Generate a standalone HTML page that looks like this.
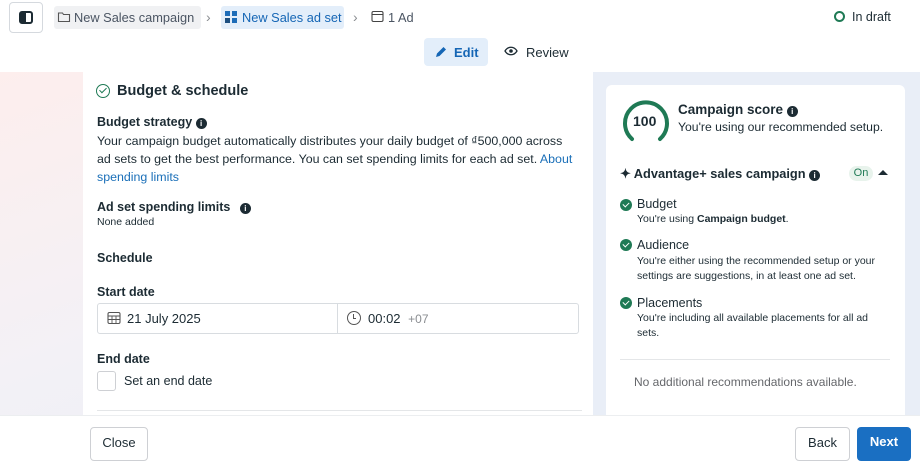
<!DOCTYPE html>
<html><head><style>
*{box-sizing:border-box;margin:0;padding:0}
body{width:920px;height:456px;overflow:hidden;font-family:"Liberation Sans",sans-serif;color:#1c2b33;background:#fff;position:relative;font-size:13px}
.abs{position:absolute}
.bg{left:0;top:72px;width:920px;height:344px;background:linear-gradient(160deg,#fdeeed 0%,#f3f1f6 45%,#e6eef8 100%)}
.rp{left:593px;top:72px;width:327px;height:344px;background:#e9eef7}
.card{left:83px;top:72px;width:510px;height:344px;background:#fff}
.rcard{left:606px;top:85px;width:299px;height:340px;background:#fff;border-radius:6px}
.b{font-weight:bold}
.small{font-size:10.5px}
.info{display:inline-block;width:11px;height:11px;border-radius:50%;background:#1c2b33;color:#fff;font-size:8px;text-align:center;line-height:11px;font-weight:bold;vertical-align:0px}
.chk{width:12px;height:12px;border-radius:50%;background:#1f7a55}
.chk:after{content:"";position:absolute;left:4px;top:2px;width:3px;height:5px;border-right:1.5px solid #fff;border-bottom:1.5px solid #fff;transform:rotate(45deg)}
</style></head><body>
<div class="abs bg"></div><div class="abs rp"></div><div class="abs card"></div><div class="abs rcard"></div>

<!-- top bar -->
<div class="abs" style="left:9px;top:2px;width:34px;height:31px;border:1px solid #d5d9de;border-radius:4px;background:#fff"></div>
<div class="abs" style="left:19px;top:11px;width:14px;height:13px;border:2px solid #1c2b33;border-radius:3px"><div style="width:5px;height:9px;background:#1c2b33"></div></div>
<div class="abs" style="left:54px;top:6px;width:147px;height:23px;background:#f0f1f3;border-radius:3px"></div>
<svg class="abs" style="left:57px;top:10px" width="14" height="14" viewBox="0 0 14 14"><path d="M1.5 3h4l1 1.5h6v7h-11z" fill="none" stroke="#555" stroke-width="1.1"/></svg>
<div class="abs" style="left:74px;top:10px;font-size:12.8px;color:#4b5563">New Sales campaign</div>
<div class="abs" style="left:206px;top:9px;color:#8a8d91;font-size:14px">›</div>
<div class="abs" style="left:221px;top:6px;width:123px;height:23px;background:#e3eefa;border-radius:3px"></div>
<svg class="abs" style="left:224px;top:10px" width="14" height="14"><rect x="1" y="1" width="5" height="5" fill="#1c6cb8"/><rect x="8" y="1" width="5" height="5" fill="#1c6cb8"/><rect x="1" y="8" width="5" height="5" fill="#1c4f80"/><rect x="8" y="8" width="5" height="5" fill="#1c6cb8"/></svg>
<div class="abs" style="left:242px;top:10px;font-size:12.8px;color:#1566b5">New Sales ad set</div>
<div class="abs" style="left:353px;top:9px;color:#8a8d91;font-size:14px">›</div>
<svg class="abs" style="left:371px;top:10px" width="13" height="13"><rect x="1" y="1.5" width="11" height="10" rx="1.5" fill="none" stroke="#444" stroke-width="1.1"/><line x1="1" y1="4.5" x2="12" y2="4.5" stroke="#444"/></svg>
<div class="abs" style="left:388px;top:10px;font-size:12.8px;color:#4b5563">1 Ad</div>
<div class="abs" style="left:834px;top:11px;width:11px;height:11px;border:2px solid #1f7a55;border-radius:50%"></div>
<div class="abs" style="left:852px;top:10px;font-size:12.5px">In draft</div>
<div class="abs" style="left:424px;top:38px;width:64px;height:28px;background:#e3eefa;border-radius:4px"></div>
<svg class="abs" style="left:434px;top:45px" width="14" height="14"><path d="M2 12l1-3.5 6.5-6.5 2.5 2.5-6.5 6.5z" fill="#1566b5"/></svg>
<div class="abs b" style="left:454px;top:45px;color:#1566b5">Edit</div>
<svg class="abs" style="left:504px;top:46px" width="14" height="10"><path d="M1 5c3-5 9-5 12 0c-3 5-9 5-12 0z" fill="none" stroke="#1c2b33" stroke-width="1.3"/><circle cx="7" cy="5" r="1.8" fill="#1c2b33"/></svg>
<div class="abs" style="left:526px;top:45px">Review</div>

<!-- main card -->
<div class="abs" style="left:96px;top:84px;width:14px;height:14px;border:1.3px solid #1f7a55;border-radius:50%"></div>
<div class="abs" style="left:101px;top:86px;width:4px;height:7px;border-right:1.3px solid #1f7a55;border-bottom:1.3px solid #1f7a55;transform:rotate(45deg)"></div>
<div class="abs b" style="left:117px;top:83px;font-size:14.5px">Budget &amp; schedule</div>
<div class="abs b" style="left:97px;top:115px;font-size:12.5px">Budget strategy <span class="info">i</span></div>
<div class="abs" style="left:97px;top:132px;width:480px;line-height:18px;font-size:12.4px">Your campaign budget automatically distributes your daily budget of ₫500,000 across ad sets to get the best performance. You can set spending limits for each ad set. <span style="color:#1a6fb8">About spending limits</span></div>
<div class="abs b" style="left:97px;top:200px;font-size:12.5px">Ad set spending limits <span class="info" style="margin-left:6px">i</span></div>
<div class="abs small" style="left:97px;top:216px">None added</div>
<div class="abs b" style="left:97px;top:251px;font-size:12.5px">Schedule</div>
<div class="abs b" style="left:97px;top:285px;font-size:12.5px">Start date</div>
<div class="abs" style="left:97px;top:303px;width:482px;height:31px;border:1px solid #d8dce0;border-radius:3px"></div>
<div class="abs" style="left:337px;top:304px;width:1px;height:29px;background:#d8dce0"></div>
<svg class="abs" style="left:107px;top:311px" width="14" height="14"><rect x="1" y="1.5" width="12" height="11" rx="1.5" fill="none" stroke="#555" stroke-width="1.1"/><path d="M1 5h12M1 8.5h12M5 5v7.5M9 5v7.5" stroke="#555" stroke-width="0.9"/></svg>
<div class="abs" style="left:127px;top:311px">21 July 2025</div>
<div class="abs" style="left:347px;top:311px;width:14px;height:14px;border:1.2px solid #555;border-radius:50%"></div>
<div class="abs" style="left:353px;top:314px;width:3px;height:5px;border-left:1.2px solid #555;border-bottom:1.2px solid #555"></div>
<div class="abs" style="left:368px;top:311px">00:02 <span style="color:#8a8d91;font-size:12px;margin-left:4px">+07</span></div>
<div class="abs b" style="left:97px;top:352px;font-size:12.5px">End date</div>
<div class="abs" style="left:97px;top:371px;width:19px;height:20px;border:1px solid #ced0d4;border-radius:3px"></div>
<div class="abs" style="left:124px;top:374px;font-size:12.5px">Set an end date</div>
<div class="abs" style="left:97px;top:410px;width:485px;height:1px;background:#e4e6e8"></div>

<!-- right card -->
<svg class="abs" style="left:620px;top:97px" width="52" height="46"><path d="M12 42A21 21 0 1 1 40 42" fill="none" stroke="#1f7a55" stroke-width="4" stroke-linecap="round"/></svg>
<div class="abs b" style="left:633px;top:113px;font-size:14px">100</div>
<div class="abs b" style="left:678px;top:102px;font-size:13.5px">Campaign score <span class="info">i</span></div>
<div class="abs" style="left:678px;top:120px;font-size:12.2px">You're using our recommended setup.</div>
<div class="abs b" style="left:620px;top:166px;font-size:12.8px">✦ Advantage+ sales campaign <span class="info">i</span></div>
<div class="abs" style="left:849px;top:166px;width:24px;height:15px;background:#e8f3ec;border-radius:8px;color:#1f7a55;font-size:11px;text-align:center;line-height:15px">On</div>
<div class="abs" style="left:878px;top:170px;width:0;height:0;border-left:5px solid transparent;border-right:5px solid transparent;border-bottom:5px solid #1c2b33"></div>
<div class="abs chk" style="left:620px;top:199px"></div>
<div class="abs" style="left:637px;top:197px;font-size:12.5px">Budget</div>
<div class="abs small" style="left:637px;top:213px">You're using <b>Campaign budget</b>.</div>
<div class="abs chk" style="left:620px;top:239px"></div>
<div class="abs" style="left:637px;top:238px;font-size:12.5px">Audience</div>
<div class="abs small" style="left:637px;top:254px;width:250px;line-height:15px">You're either using the recommended setup or your settings are suggestions, in at least one ad set.</div>
<div class="abs chk" style="left:620px;top:297px"></div>
<div class="abs" style="left:637px;top:296px;font-size:12.5px">Placements</div>
<div class="abs small" style="left:637px;top:311px;width:236px;line-height:15px">You're including all available placements for all ad sets.</div>
<div class="abs" style="left:620px;top:359px;width:270px;height:1px;background:#e4e6e8"></div>
<div class="abs" style="left:634px;top:375px;color:#65676b;font-size:12px">No additional recommendations available.</div>

<!-- bottom -->
<div class="abs" style="left:0;top:415px;width:920px;height:41px;background:#fff;border-top:1px solid #eceef0"></div>
<div class="abs" style="left:90px;top:427px;width:58px;height:34px;border:1px solid #ced0d4;border-radius:4px;text-align:center;line-height:30px">Close</div>
<div class="abs" style="left:795px;top:427px;width:55px;height:34px;border:1px solid #ced0d4;border-radius:4px;text-align:center;line-height:30px">Back</div>
<div class="abs b" style="left:857px;top:427px;width:54px;height:34px;background:#1a6fc2;color:#fff;border-radius:4px;text-align:center;line-height:30px">Next</div>
</body></html>
